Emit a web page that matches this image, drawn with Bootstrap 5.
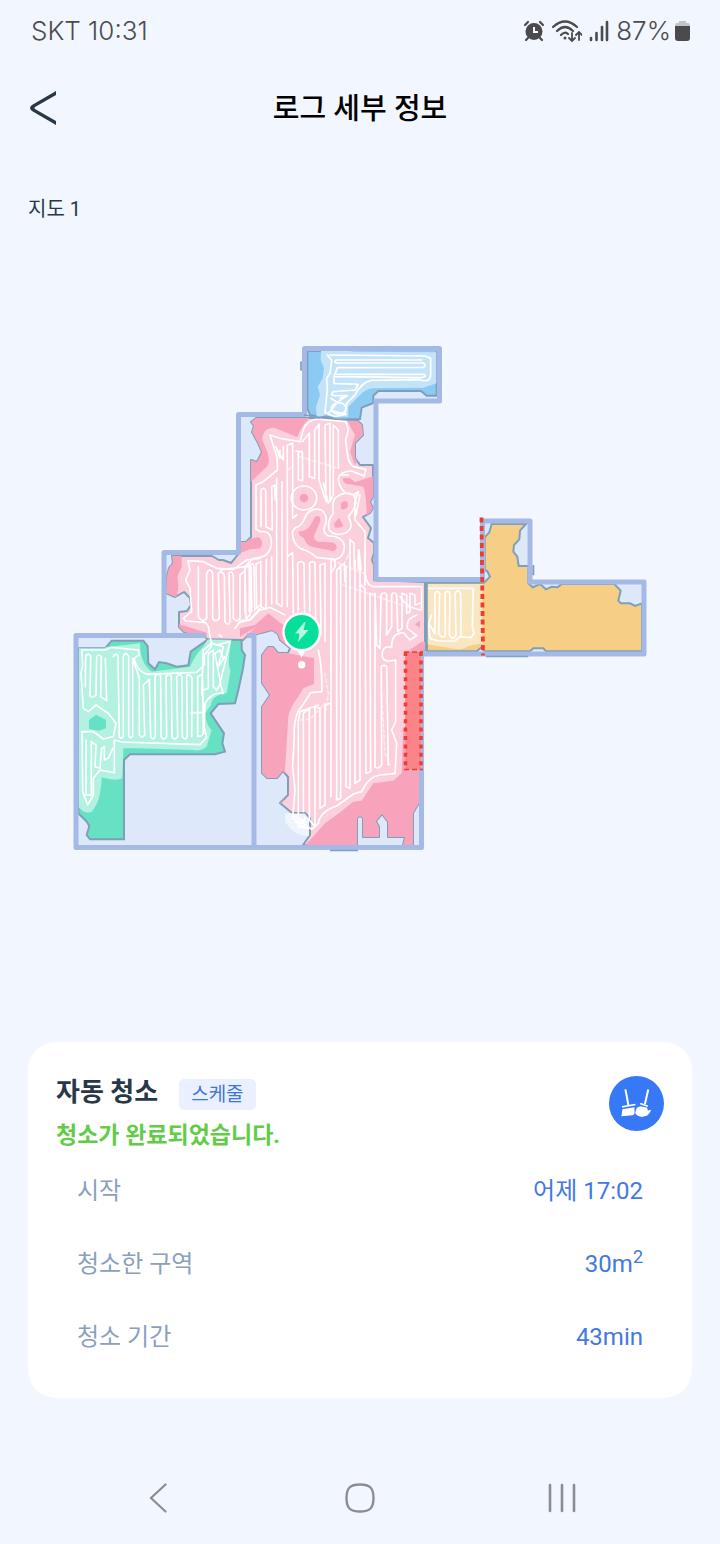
<!DOCTYPE html>
<html lang="ko">
<head>
<meta charset="utf-8">
<meta name="viewport" content="width=device-width, initial-scale=1">
<title>로그 세부 정보</title>
<link href="https://cdn.jsdelivr.net/npm/bootstrap@5.3.0/dist/css/bootstrap.min.css" rel="stylesheet">
<style>
  body { background: #f1f6ff; color: #283848; font-family: Roboto, "Noto Sans CJK KR", sans-serif; }
  svg { display: block; }
  .status-bar { height: 62px; padding: 0 30px 0 31px; color: #4b4b4d; font-size: 26px; line-height: 30px; font-family: Inter, Roboto, sans-serif; font-weight: 300; }
  .status-icons { gap: 7px; }
  .page-head { height: 92px; padding-top: 2px; }
  .page-head h1 { font-size: 29px; line-height: 40px; font-weight: 500; color: #000; }
  .back-btn { left: 22px; top: 25px; padding: 4px 8px; line-height: 0; }
  .map-name { padding: 38px 28px 0; font-size: 20px; line-height: 34px; }
  .log-card { margin: 0 28px; padding: 28px 28px 25px; border: 0; border-radius: 28px; }
  .log-title { font-size: 26px; line-height: 44px; font-weight: 700; }
  .log-tag { font-size: 19px; line-height: 31px; padding: 0 12px; margin-left: 21px; margin-top: 9px; border-radius: 5px; background: #eaf0ff; color: #3d74e0; }
  .log-state { padding-top: 4px; font-size: 23px; line-height: 36px; font-weight: 700; color: #62cc48; }
  .log-row { height: 73px; padding: 0 21px; font-size: 24px; line-height: 36px; }
  .log-row dt { font-weight: 400; color: #8ba0bd; }
  .log-row dd { color: #4278e4; }
  .log-row sup { font-size: 18px; line-height: 0; }
  .log-icon { width: 55px; height: 55px; margin-top: 6px; }
  .soft-keys { margin-top: 54px; height: 92px; padding: 0 57px; }
  .soft-keys button { line-height: 0; }
  .edge { stroke: #7f9fb9; stroke-width: 2; stroke-linejoin: round; }
  .trail { fill: none; stroke: #fff; stroke-width: 5; stroke-linejoin: round; stroke-linecap: round; }
  .house-wall { fill: none; stroke: #a5b9e7; stroke-width: 5; stroke-linejoin: round; }
</style>
</head>
<body>
<div class="status-bar d-flex align-items-center justify-content-between">
  <span>SKT 10:31</span>
  <div class="status-icons d-flex align-items-center">
    <svg width="22" height="22" viewBox="0 0 22 22" aria-hidden="true"><g fill="none" stroke="#4b4b4d" stroke-width="2.2" stroke-linecap="round"><path d="M2 5 5 2M17 2l3 3M5 18l-2 2M17 18l2 2"/></g><circle cx="11" cy="11.500" r="8.500" fill="#4b4b4d"/><path d="M11 7v5h4" fill="none" stroke="#fff" stroke-width="2"/></svg>
    <svg width="30" height="24" viewBox="0 0 30 24" aria-hidden="true"><g fill="none" stroke="#4b4b4d" stroke-width="2.200" stroke-linecap="round"><path d="M1 8Q13-3 25 8M5 12Q13 4 21 12M9 16Q13 12 16 15"/><path stroke-width="1.800" d="M20 14v8m-3-3 3 3 3-3M27 21v-8m-3 3 3-3 3 3"/></g><circle cx="13" cy="19" r="1.500" fill="#4b4b4d"/></svg>
    <svg width="20" height="22" viewBox="0 0 20 22" aria-hidden="true"><path d="M2 18v2M7.500 13v7M13 7v13M18 2v18" stroke="#4b4b4d" stroke-width="2.600" stroke-linecap="round"/></svg>
    <span class="d-flex align-items-center gap-1"><span>87%</span>
    <svg width="15" height="20" viewBox="0 0 15 20" aria-hidden="true"><path d="M4 0h7v2h2q2 0 2 3H0Q0 2 2 2h2z" fill="#c1c4cc"/><path d="M0 5h15v12q0 3-3 3H3q-3 0-3-3z" fill="#4b4b4d"/></svg></span>
  </div>
</div>
<header class="page-head position-relative d-flex align-items-center justify-content-center">
  <button type="button" class="back-btn btn border-0 position-absolute" aria-label="뒤로"><svg width="26" height="34" viewBox="0 0 26 34"><path d="M26 0v4L5 16q-1 1 0 2l21 12v4L2 20q-4-3 0-6z" fill="#283848"/></svg></button>
  <h1 class="m-0">로그 세부 정보</h1>
</header>
<main>
  <div class="map-name">지도 1</div>
  <svg class="w-100" viewBox="0 226 720 816" role="img" aria-label="청소 지도">
    <defs>
      <path id="hall" d="M256 418 251 422 254 426 252 432 258 443 262 452 257 462 251 460V537L246 542H239L240 552 236 557 231 563 223 560H219L212 556H172L173 563 169 568 167 576 166 593 175 597 184 592 190 598 191 605 187 611 179 612V627L184 632 205 637 208 640H243L247 636 257 634 265 632 272 630 278 634 280 640 290 648 288 653H278L273 647H268L262 655V683L270 695 262 707V773L267 778H277L283 771 288 777V795L280 803 292 813H305L310 818V835L303 845H357V818L360 816 363 818V837H379V827L376 821 382 814 388 822V837H405L403 845H413V813L419 803V652L425 650V582L374 580V565L372 560 374 553V543L368 538 371 528 363 517 370 513 373 508 370 502 373 497V465H360L355 458V443L363 435 362 425 357 420 310 418Z"/>
      <path id="green" d="M57 325H135L155 302H250L263 318 265 370 285 388 297 366 320 370 350 380 385 376 392 335 435 305 445 298 545 300V330L555 345 548 390 535 450 525 490 475 492 452 520 472 550 492 580 487 610 495 635 465 643H210L192 660V898H90L80 885 88 858 80 845 55 820Z"/>
      <path id="sky" d="M262 48H345L355 44H650V182H620L603 168H475L460 182V204L425 218 420 252 350 254 270 240 262 220Z"/>
      <path id="gold" d="M51 218H222L240 200 232 184 224 180V82L238 67 245 42H348L330 62 328 88 312 105 310 125 322 140 326 168H355V220L368 232 390 222 408 238 425 230 443 232 455 222H613L632 242 625 272 633 280H660L675 288 696 280V424H408L400 415H370L360 424H225L212 414 200 424H51Z"/>
      <clipPath id="hallClip"><use href="#hall"/></clipPath>
      <clipPath id="greenClip"><use href="#green"/></clipPath>
      <clipPath id="skyClip"><use href="#sky"/></clipPath>
      <clipPath id="goldClip"><use href="#gold"/></clipPath>
    </defs>

    <path fill="#dde8fb" d="M304 348H440V401H376V579H482V521H530V581H644V654H421V848H76V635H164V552H238V414H304Z"/>
    <use href="#hall" fill="#fbd0dc" class="edge"/>

    <!-- hall: floor that was not reached -->
    <g clip-path="url(#hallClip)" fill="#f6a3bb">
      <g transform="translate(220 335) scale(.33333)">
        <path d="M90 248H270Q245 270 232 306L162 278Q128 278 127 315L142 350Q155 390 130 405L93 440ZM382 258H440V330L405 390 390 350 405 300ZM235 590Q262 588 272 570L285 545Q304 538 300 560L287 592Q275 610 292 620L330 622Q350 622 350 640 345 653 328 646L280 636Q258 632 252 610L240 602ZM368 430H390L405 442 470 420V545L440 540Q438 470 430 455L390 448Q370 450 368 430ZM365 502Q385 492 384 514 377 524 366 524 359 515 365 502ZM342 566 357 548 370 572Q363 580 345 578ZM60 620 115 606Q135 620 120 640L90 643 60 655Z"/>
        <circle cx="252" cy="489" r="13"/>
      </g>
      <g transform="translate(60 540) scale(.33333)"><path d="M315 40H365V80L352 110Q360 150 345 178H315ZM350 250 440 278 440 305 350 290ZM545 300 600 250V310Z"/></g>
      <g transform="translate(240 560) scale(.33333)"><path d="M0 205 45 195 85 160 120 188 145 200V280L222 295V372L190 385 175 410Q150 440 145 470L140 550 135 630 145 700 100 760H50V200L0 230ZM190 860 215 835 255 790 290 765 340 725 365 722 400 670 460 662 485 640 490 500 482 520 495 500V280L545 245H560V860ZM525 193 540 182V203Z"/></g>
    </g>

    <g transform="translate(60 540) scale(.33333)">
      <use href="#green" fill="#66e1c3" stroke="#7f9fb9" stroke-width="6"/>
      <g clip-path="url(#greenClip)">
        <path fill="#b3f1e0" d="M50 320H150L240 310Q240 370 275 395L390 380Q405 345 430 320L445 295H515Q500 380 512 390L500 460Q455 465 453 495L435 520Q440 560 455 570L440 620Q420 635 400 630L230 625H190L187 715Q165 725 125 712 123 785 95 815 75 825 55 800Z"/>
        <path fill="#66e1c3" d="M87 540 108 524 138 540V565L118 572 87 567Z"/>
      </g>
      <path class="trail" d="M65 330H135L155 322 235 330 238 345 222 355Q232 395 262 403L410 397 433 375V345L455 318M65 332 68 375 63 400 70 505 85 515 108 495 145 520 168 550 160 590 130 597 100 575H66L68 755 83 795 100 765V715L120 690 163 698V600L185 606 420 614 440 592 432 560 435 490Q455 455 490 460L480 430 510 305 470 315"/>
      <path class="trail" d="M77 345 76 440M77 350Q85 335 92 350L90 468Q98 475 108 465L110 350Q118 340 124 350L122 470 140 482 136 355M160 350Q168 335 174 350L178 590Q185 600 190 588V350Q196 330 206 350V588Q212 598 218 588L218 355 238 415V585Q246 597 254 585L250 435 268 418 272 590Q280 604 286 588L285 410Q295 395 302 410L303 590Q312 604 320 590L318 410Q326 397 334 410L336 590Q344 605 353 590L350 410Q358 397 366 410L367 590Q376 604 382 590L380 408Q390 400 396 415L395 590M413 590V410L428 403M413 585Q422 595 430 580L428 420M393 518H430M78 600V765H94V605L108 615 105 680 120 685 125 625 133 620V660L145 655 158 625"/>
      <path class="trail" d="M430 450 445 445V340L460 330V440L470 450 482 430 465 340 480 330 490 355M425 465 430 330 455 310 490 320 475 380 495 350"/>
      <path class="trail" d="M384 62 430 65 470 85 520 88 560 60 600 55M384 62 390 90 377 120 390 145 395 215 370 235 378 243 435 247Q450 260 447 275L455 310M415 80V230Q428 250 440 235L440 100Q450 80 458 100V235Q467 250 478 235L475 100Q485 90 493 105L495 245Q504 260 510 245L507 100Q515 90 520 105V235Q530 250 540 235V105L555 92 558 235 570 225V75Q578 65 582 80L584 210 600 195M525 265 542 242 570 238 600 205M485 290 478 285"/>
    </g>

    <g transform="translate(220 335) scale(.33333)">
      <path d="M262 82H243V104H262" fill="none" stroke="#7f9fb9" stroke-width="5"/>
      <use href="#sky" fill="#8bcaf2" stroke="#7f9fb9" stroke-width="6"/>
      <g clip-path="url(#skyClip)"><path fill="#c2e3f8" d="M303 45 302 75 312 100 308 130 293 155 300 180 288 215 290 245H385V215L420 180Q440 160 460 160L610 158 650 145V52L405 50 385 48Z"/></g>
      <path class="trail" d="M322 60 335 75 330 115 320 130 322 165 315 232 345 245 375 238 380 205 405 180Q425 140 455 136L600 134Q630 145 632 120V70L615 63 330 60M605 75H348Q342 84 350 84H610Q622 92 610 97L352 98 342 125 605 128Q622 125 612 118H350M342 130V145L415 148 405 165 340 170Q330 180 340 182H382L352 202 332 190"/>
      <ellipse class="trail" cx="356" cy="220" rx="22" ry="17"/>
      <path class="trail" d="M328 232 350 205M340 228 378 238M360 190 376 184"/>

      <path class="trail" d="M150 300 180 310 240 320 250 285Q258 258 290 252L378 260 385 285 377 315 382 355Q385 385 400 395L437 403 433 423 395 408Q355 410 355 435 360 465 380 475L405 480M150 300 172 370V405L130 440 108 450V582L120 590Q157 585 154 630 148 670 100 670L75 695 0 705"/>
      <path class="trail" d="M123 575V465Q130 455 137 465L138 575 157 585 155 455 165 450V495M235 350V435L248 437 247 350 228 348M247 320 268 295V425L284 430V285L297 268V435L318 500 315 270 330 265V500L340 480V270L355 285V400M168 335 180 370V345M172 345 190 375V333M310 445 325 505M435 590V725"/>
      <ellipse class="trail" cx="252" cy="489" rx="38" ry="36"/>
      <path class="trail" d="M235 575Q250 565 258 540 275 515 305 525 326 545 315 572 305 590 325 603 365 602 373 630 375 665 345 674L290 667Q270 650 240 640 215 620 218 590 222 578 235 575ZM345 490Q375 465 400 480 420 505 385 545 405 580 375 595 345 605 328 585 320 560 340 535 335 505 345 490ZM400 480 415 470M415 475Q400 500 405 520V555L435 590M420 480 408 540M365 420H385"/>
      <path class="trail" opacity=".5" stroke-dasharray="12 8" d="M240 365 355 400M335 675 430 715M370 690 390 650M205 405 220 390"/>
    </g>

    <!-- hall: long passes through the middle -->
    <g transform="translate(160 400) scale(.33333)">
      <path class="trail" d="M350 235V610L366 620V245M382 620V135L398 130V355L410 345M382 470 398 458 400 640M415 640 413 490Q422 480 432 490L434 650M449 650V490Q457 480 465 490L467 660M483 700 480 495 495 490V725M513 500V475L525 480V500L513 520M538 500 553 490 555 545M570 500V418L582 430 583 500M595 450V505L603 510 597 450M255 640V505L268 495V635M275 635 273 500M290 625 288 492 302 485 303 620 318 628 319 478M335 470V612"/>
    </g>

    <g transform="translate(240 560) scale(.33333)">
      <path class="trail" d="M0 187 30 180 60 150 90 142 135 165M235 270Q248 330 245 395L212 398 185 440Q160 465 163 530L158 620 165 690 158 775Q185 785 215 808L235 790Q240 755 290 738L340 702 365 695Q385 650 420 645L465 640 470 550 455 510 467 485 467 300Q425 310 427 285 425 255 455 262 453 220 490 218L510 240 530 227 502 205Q497 175 530 165M375 40Q380 78 400 80H545V150Q500 145 480 110"/>
      <path class="trail" d="M273 20V710M290 30 302 20V715L290 720V30M318 20V680L330 685V0M345 0V670L360 660V0M362 75 375 85 378 640 392 635 390 100 405 105V620Q415 630 425 615L424 320Q432 312 440 320L445 615M405 100 410 255 420 265 423 105Q432 90 440 105V225L455 200V105Q463 90 470 105L473 215 486 205V100L500 105V160L510 155V100L525 105V135L540 130M375 75V0M175 480V765M190 755V460L208 445V780L225 800V440L240 445V745L255 735V435L270 430M175 480 180 455 235 435"/>
      <path class="trail" opacity=".5" stroke-dasharray="10 8" d="M310 75 515 145M255 340 265 400 258 450M180 480 210 478 255 430M425 400 435 580 450 615"/>
      <path d="M135 760 155 760H195L207 780V828Q165 830 135 785Z" fill="#fff" opacity=".55"/>
      <path class="trail" d="M160 765 195 785 165 785 205 805 175 800 195 775"/>
    </g>

    <g transform="translate(410 510) scale(.33333)">
      <path d="M370 165V193H362M235 438H355" fill="none" stroke="#7f9fb9" stroke-width="6"/>
      <use href="#gold" fill="#f7ce85" stroke="#7f9fb9" stroke-width="6"/>
      <g clip-path="url(#goldClip)"><path fill="#fae6c1" d="M52 222H217V400L175 408Q160 422 120 415L52 403Z"/></g>
      <path class="trail" d="M57 235H190L187 350 192 370 183 383 150 380 135 393H85L60 385 55 345 65 315M75 370V250Q82 238 89 250L86 370Q98 390 106 375L105 250Q112 238 120 250L118 375Q130 395 138 375L135 250Q144 235 152 250L153 375M60 345 75 372"/>
      <path d="M50 218V424" stroke="#7f9fb9" stroke-width="6"/>
    </g>

    <path class="house-wall" d="M304.500 348.500H439.500V401H376V579.500H482.500V521H530V582H644V654H421.500V847.500H76V635.500H164V552.500H238.500V414.500H304.500ZM164 635.500H206M247 635.500H254V847.500"/>
    <path d="M330 850.500H358M486 656.500H528M304 415 310 416 318 418 326 416 337 419" fill="none" stroke="#7f9fcc" stroke-width="1.500"/>
    <path d="M405.500 652H421V769.500H405.500Z" fill="#fa8488"/>
    <path d="M405.500 652V770M421 652V770" stroke="#ef3b31" stroke-width="3.500" stroke-dasharray="4 4.400"/>
    <path d="M404 652H423M404 769.500H423" stroke="#ef3b31" stroke-width="1.500" stroke-dasharray="5 3"/>
    <path d="M481.500 517.500 483 655.500" stroke="#ef3b31" stroke-width="3.800" stroke-dasharray="5 3.500"/>

    <path d="M294 648Q299 651 301.500 658 304 651 309 648Z" fill="#fff"/>
    <circle cx="301.700" cy="632" r="19.500" fill="#fff"/>
    <circle cx="301.700" cy="632" r="17" fill="#06df9b"/>
    <path d="M304.500 622 295 633.500H299.500L298 642 308.500 630H303.500L305.500 622Z" fill="#b8f8df"/>
    <circle cx="301.700" cy="664.700" r="3.700" fill="#fff"/>
  </svg>

  <section class="log-card card">
    <div class="d-flex justify-content-between align-items-start">
      <div>
        <div class="d-flex align-items-start"><h2 class="log-title m-0">자동 청소</h2><span class="log-tag">스케줄</span></div>
        <p class="log-state m-0">청소가 완료되었습니다.</p>
      </div>
      <svg class="log-icon" viewBox="57 48 164 164" aria-hidden="true"><circle cx="139" cy="130" r="82" fill="#3778f6"/><g fill="none" stroke="#fff" stroke-width="5"><path d="M106 88 115 136M174 88 164 132" stroke-width="6"/><path d="M96 140 136 133M150 130 173 138"/></g><path d="M97 147 133 141V161L128 165 94 168ZM140 143 150 138 170 142 173 151 183 149Q178 162 171 166L155 170Q138 168 135 157Z" fill="#fff"/></svg>
    </div>
    <dl class="m-0">
      <div class="log-row d-flex align-items-center justify-content-between"><dt>시작</dt><dd class="m-0">어제 17:02</dd></div>
      <div class="log-row d-flex align-items-center justify-content-between"><dt>청소한 구역</dt><dd class="m-0">30m<sup>2</sup></dd></div>
      <div class="log-row d-flex align-items-center justify-content-between"><dt>청소 기간</dt><dd class="m-0">43min</dd></div>
    </dl>
  </section>
</main>
<nav class="soft-keys d-flex align-items-center" aria-label="시스템 탐색">
  <button type="button" class="btn border-0 flex-fill w-100 d-flex justify-content-center" aria-label="이전"><svg width="18" height="30" viewBox="0 0 18 30"><path d="M16.500 1.500 2 15 16.500 28.500" fill="none" stroke="#8b8d93" stroke-width="2.200" stroke-linecap="round"/></svg></button>
  <button type="button" class="btn border-0 flex-fill w-100 d-flex justify-content-center" aria-label="홈"><svg width="30" height="30" viewBox="0 0 30 30"><path d="M15 1.500C25 1.500 28.500 5 28.500 15S25 28.500 15 28.500 1.500 25 1.500 15 5 1.500 15 1.500Z" fill="none" stroke="#8b8d93" stroke-width="2.400"/></svg></button>
  <button type="button" class="btn border-0 flex-fill w-100 d-flex justify-content-center" aria-label="최근 앱"><svg width="28" height="30" viewBox="0 0 28 30"><path d="M2 2V28M14 2V28M26 2V28" stroke="#8b8d93" stroke-width="2.600" stroke-linecap="round"/></svg></button>
</nav>
<script src="https://cdn.jsdelivr.net/npm/bootstrap@5.3.0/dist/js/bootstrap.bundle.min.js"></script>
</body>
</html>
